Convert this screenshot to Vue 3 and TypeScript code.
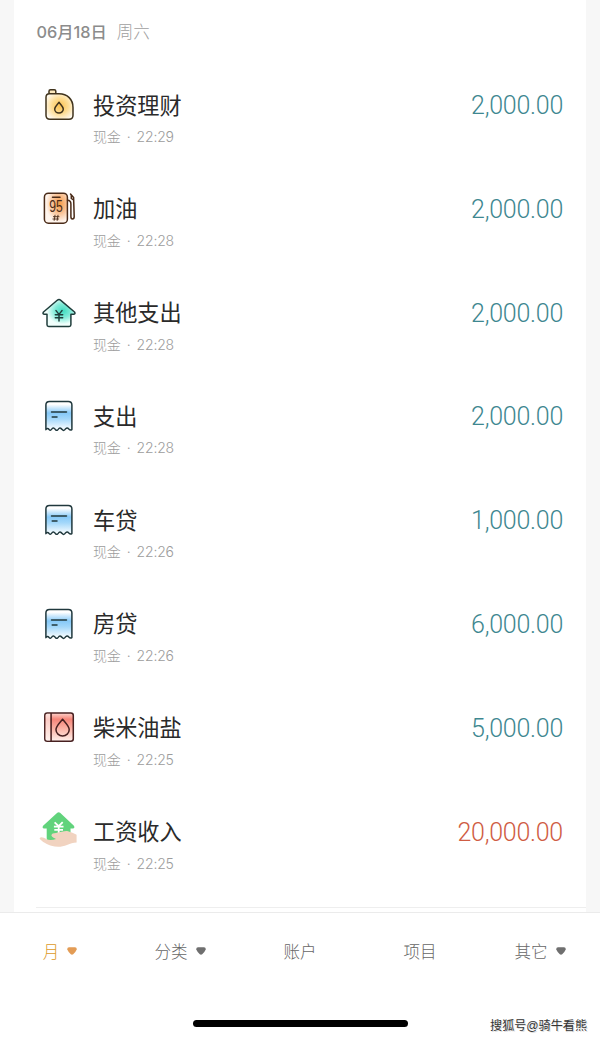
<script setup lang="ts">
type IconName = 'canister' | 'pump' | 'house' | 'receipt' | 'book' | 'salary'

interface Entry {
  icon: IconName
  title: string
  time: string
  amount: string
  income?: boolean
}

interface Tab {
  label: string
  menu: boolean
  active?: boolean
}

const entries: Entry[] = [
  { icon: 'canister', title: '投资理财', time: '22:29', amount: '2,000.00' },
  { icon: 'pump', title: '加油', time: '22:28', amount: '2,000.00' },
  { icon: 'house', title: '其他支出', time: '22:28', amount: '2,000.00' },
  { icon: 'receipt', title: '支出', time: '22:28', amount: '2,000.00' },
  { icon: 'receipt', title: '车贷', time: '22:26', amount: '1,000.00' },
  { icon: 'receipt', title: '房贷', time: '22:26', amount: '6,000.00' },
  { icon: 'book', title: '柴米油盐', time: '22:25', amount: '5,000.00' },
  { icon: 'salary', title: '工资收入', time: '22:25', amount: '20,000.00', income: true },
]

const tabs: Tab[] = [
  { label: '月', menu: true, active: true },
  { label: '分类', menu: true },
  { label: '账户', menu: false },
  { label: '项目', menu: false },
  { label: '其它', menu: true },
]
</script>

<template>
  <div class="screen">
    <svg class="defs" width="0" height="0" aria-hidden="true">
      <defs>
        <radialGradient id="g-yellow" cx="0.52" cy="0.48" r="0.6">
          <stop offset="0" stop-color="#fbc250" />
          <stop offset="0.5" stop-color="#fddc92" />
          <stop offset="1" stop-color="#fffaf0" />
        </radialGradient>
        <radialGradient id="g-orange" cx="0.66" cy="0.36" r="0.6">
          <stop offset="0" stop-color="#f59a45" />
          <stop offset="0.5" stop-color="#fac192" />
          <stop offset="1" stop-color="#fff5ed" />
        </radialGradient>
        <radialGradient id="g-teal" cx="0.62" cy="0.42" r="0.5">
          <stop offset="0" stop-color="#3fdcc0" />
          <stop offset="0.5" stop-color="#80ebd8" />
          <stop offset="1" stop-color="#f1fffc" />
        </radialGradient>
        <linearGradient id="g-blue" x1="0" y1="0" x2="0" y2="1">
          <stop offset="0.1" stop-color="#ffffff" />
          <stop offset="0.4" stop-color="#86c9f8" />
          <stop offset="0.6" stop-color="#a3d7fa" />
          <stop offset="0.95" stop-color="#f6fcff" />
        </linearGradient>
        <linearGradient id="g-red" x1="0" y1="0" x2="0" y2="1">
          <stop offset="0" stop-color="#fdd5ce" />
          <stop offset="0.22" stop-color="#f58478" />
          <stop offset="0.6" stop-color="#fcb9ac" />
          <stop offset="1" stop-color="#fff1ec" />
        </linearGradient>
      </defs>
    </svg>

    <main class="sheet">
      <header class="day"><b>06月18日</b><span>周六</span></header>

      <ul class="list">
        <li v-for="(e, i) in entries" :key="i" class="row">
          <svg class="icon" viewBox="0 0 40 40">
            <g v-if="e.icon === 'canister'" fill="none" stroke="#40331c" stroke-width="1.5" stroke-linejoin="round">
              <path d="M10 8.7V6.2Q10 4.7 11.5 4.7H15.3Q16.8 4.7 16.8 6.2V8.7" fill="#fde9bd" />
              <path d="M10.5 8.8H20C28.5 8.8 34 14.5 34 22.5V30.2Q34 34.2 30 34.2H11Q7 34.2 7 30.2V12.3Q7 8.8 10.5 8.8Z" fill="url(#g-yellow)" />
              <path d="M20 17.3C18 20 15.7 21.7 15.7 24A4.3 4 0 0 0 24.3 24C24.3 21.7 22 20 20 17.3Z" />
            </g>

            <g v-else-if="e.icon === 'pump'" fill="none" stroke="#4a2b18" stroke-width="1.5" stroke-linecap="round" stroke-linejoin="round">
              <rect x="5.4" y="4.2" width="23" height="30" rx="4" fill="url(#g-orange)" />
              <path d="M13.5 8.2H21" />
              <path d="M31.5 5L34.6 8.6L35.2 27.5Q35.2 30 33.4 30Q31.9 30 31.9 27.5V15Q31.9 11.5 28.5 11.3M32.3 6.2V9.5L34.5 11" />
              <path d="M16 26.2L15.200 31.400M19 26.200L18.200 31.400M14.400 27.700H20M13.900 30H19.500" stroke-width="0.9" />
              <text class="grade" x="17" y="23.4" text-anchor="middle" textLength="13.500" lengthAdjust="spacingAndGlyphs">95</text>
            </g>

            <g v-else-if="e.icon === 'house'" fill="none" stroke="#1f3d3b" stroke-width="1.5" stroke-linecap="round" stroke-linejoin="round">
              <path d="M18.2 7.3Q20 5.8 21.8 7.3L35.5 19Q36.8 20.9 34.8 21.2H31.9V31.7Q31.9 33.4 30.2 33.4H9.7Q8 33.4 8 31.7V21.2H5.1Q3.2 20.9 4.5 19Z" fill="url(#g-teal)" />
              <path d="M17 17.6L20 21.4L23 17.6M16.3 21.7H23.7M16.3 24.7H23.7M20 21.4V28" />
            </g>

            <g v-else-if="e.icon === 'receipt'" fill="none" stroke="#20383d" stroke-width="1.5" stroke-linecap="round" stroke-linejoin="round">
              <path d="M6.9 33.6V9Q6.9 5.4 10.5 5.4H29.3Q32.9 5.4 32.9 9V33.6Q31.3 34.6 29.8 33Q28.3 31.3 26.7 32.7Q24.9 35.6 23.2 33.6Q21.6 31.3 19.9 32.5Q18.3 35.4 16.5 33.7Q14.9 31.2 13.2 32.5Q11.7 35.3 10.1 33.5Q8.5 31.6 6.9 33.6Z" fill="url(#g-blue)" />
              <path d="M12.5 16.1H27.5M13.2 21H18" />
            </g>

            <g v-else-if="e.icon === 'book'" fill="none" stroke="#472020" stroke-width="1.5" stroke-linejoin="round">
              <rect x="5.8" y="5" width="28.5" height="28.2" rx="2.5" fill="url(#g-red)" />
              <path d="M6.6 7Q6.6 5.8 8 5.8H11.3V32.4H8Q6.6 32.4 6.6 31.2Z" fill="#fff3ef" fill-opacity="0.65" stroke="none" />
              <path d="M12.1 5V33.2" />
              <path d="M23.6 11.2C20.5 15.3 17 18 17 21.7A6.6 6.2 0 0 0 30.2 21.7C30.2 18 26.7 15.3 23.6 11.2Z" />
            </g>

            <g v-else>
              <path d="M18.3 1.7Q19.7 0.6 21.1 1.7L34.9 14.7Q36.2 17.2 33.9 17.5H31.5V28Q31.5 30 29.5 30H10Q7.7 30 7.7 27.5V17.5H5Q2.8 17.2 4.1 14.7Z" fill="#61d37c" />
              <path d="M15.6 11.3L19.7 15.2L23.7 11.1M14.9 15.7H24.5M15.3 18.8H24M19.7 15.2V23" fill="none" stroke="#fff" stroke-width="1.8" />
              <path d="M0.5 27.2C2 25.4 4.5 26.5 7.2 27.9C10 29.3 13.5 29.1 17 28C15.2 27.2 12.7 26.1 12.4 24.6C12.3 22.5 14.5 22 17 21.9C22 21.5 26 19.5 29 20.3C32 21 35 22.4 37.6 23.7V31.5C34 31.9 31.5 32.6 28 34C23 36.1 17.5 36.5 12.3 34.7C8 33.1 3 31.1 0.5 27.2Z" fill="#f1d3c0" />
            </g>
          </svg>

          <div class="info">
            <h3>{{ e.title }}</h3>
            <p>现金<i>·</i>{{ e.time }}</p>
          </div>
          <strong class="amount" :class="{ income: e.income }">{{ e.amount }}</strong>
        </li>
      </ul>
    </main>

    <footer class="bar">
      <nav class="tabs">
        <button v-for="t in tabs" :key="t.label" class="tab" :class="{ active: t.active }">
          <span>{{ t.label }}</span>
          <svg v-if="t.menu" class="caret" viewBox="0 0 10 8">
            <path d="M2 0.3H8Q10 0.6 9.7 2.5Q8.5 5.5 6.2 7.3Q5 8.1 3.8 7.3Q1.5 5.5 0.3 2.5Q0 0.6 2 0.3Z" fill="currentColor" />
          </svg>
        </button>
      </nav>
      <div class="home"></div>
      <span class="credit">搜狐号@骑牛看熊</span>
    </footer>
  </div>
</template>

<style>
body {
  margin: 0;
  background: #fff;
}
</style>

<style scoped>
.screen {
  width: 600px;
  height: 1038px;
  display: flex;
  flex-direction: column;
  overflow: hidden;
  background: #f7f7f7;
  font-family: Inter, 'Noto Sans CJK SC', sans-serif;
}
.defs {
  position: absolute;
}
.sheet {
  flex: none;
  box-sizing: border-box;
  height: 912px;
  margin: 0 14px;
  padding: 0 0 0 22px;
  background: #fff;
}
.day {
  height: 64px;
  margin-bottom: 1px;
  padding-left: 0.5px;
  display: flex;
  align-items: center;
  gap: 10px;
  font-size: 16.5px;
  line-height: 24px;
  color: #868686;
}
.day b {
  font-size: 16.3px;
  font-weight: 500;
  color: #8c8c8c;
}
.day span {
  font-weight: 300;
  color: #a0a0a0;
}
.list {
  list-style: none;
  margin: 0;
  padding: 0;
  height: 842px;
  border-bottom: 1px solid #eee;
}
.row {
  height: 103.78px;
  box-sizing: border-box;
  padding: 20px 23px 0 3px;
  display: flex;
  align-items: flex-start;
}
.icon {
  width: 40px;
  height: 40px;
  flex: none;
}
.grade {
  font: 16.5px 'Liberation Sans', sans-serif;
  fill: #4a2b18;
  stroke: none;
}
.info {
  flex: 1;
  padding-left: 14px;
}
h3 {
  margin: 4.6px 0 0;
  font-size: 22.2px;
  line-height: 32px;
  font-weight: 400;
  color: #2a2a2a;
}
p {
  margin: 5.6px 0 0;
  font-size: 14px;
  line-height: 20px;
  font-weight: 300;
  letter-spacing: -0.2px;
  color: #9c9c9c;
}
p i {
  display: inline-block;
  width: 16px;
  text-align: center;
  font-style: normal;
}
.amount {
  margin-top: 1.2px;
  font-family: Roboto, 'Liberation Sans', sans-serif;
  font-size: 25px;
  line-height: 40px;
  font-weight: 300;
  letter-spacing: -0.25px;
  color: #3e8790;
}
.amount.income {
  color: #cf5c43;
}
.bar {
  position: relative;
  flex: 1;
  background: #fff;
  border-top: 1px solid #ebebeb;
  display: flex;
  flex-direction: column;
  align-items: center;
}
.tabs {
  align-self: stretch;
  height: 77px;
  display: grid;
  grid-template-columns: repeat(5, 120px);
}
.tab {
  border: 0;
  padding: 0;
  background: none;
  display: flex;
  align-items: center;
  justify-content: center;
  gap: 8px;
  font: 300 16.5px/24px 'Noto Sans CJK SC', sans-serif;
  color: #666;
}
.tab span {
  padding-bottom: 2px;
}
.tab.active {
  color: #dc9a28;
}
.caret {
  width: 10px;
  height: 8px;
  margin-bottom: 1px;
  color: #6f6f6f;
}
.active .caret {
  color: #e39c55;
}
.home {
  margin-top: 30px;
  width: 215px;
  height: 7px;
  border-radius: 4px;
  background: #000;
}
.credit {
  position: absolute;
  right: 13px;
  bottom: 3px;
  font-family: 'Liberation Sans', 'Noto Sans CJK SC', sans-serif;
  font-size: 12.1px;
  line-height: 18px;
  color: #333;
  text-shadow: 1px 1px 0 #ddd;
}
</style>
